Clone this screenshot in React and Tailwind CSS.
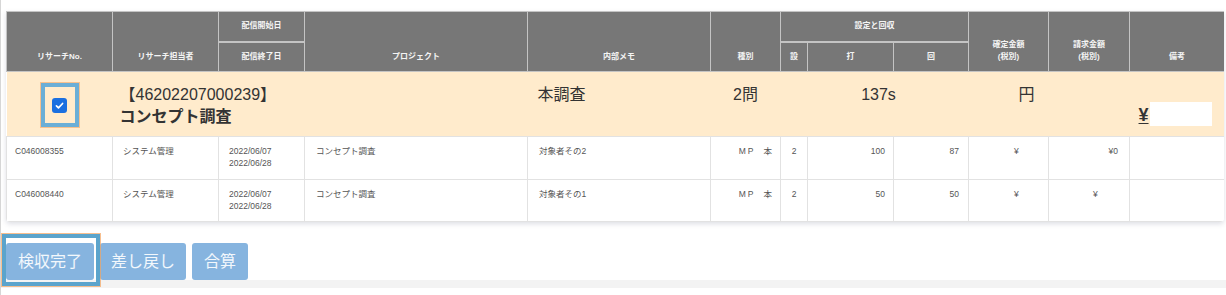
import React from "react";

const th =
  "bg-[#777777] text-[#f4f4f4] font-bold text-[8px] leading-[12px] border border-[#c4c4c4] text-center";
const td =
  "align-top pt-[9px] text-[8.5px] leading-[11.5px] text-[#555] border border-[#e2e2e2] bg-white";

const rows = [
  { no: "C046008355", memo: "対象者その2", set: "2", da: "100", kai: "87", seikyu: "¥0", right: true },
  { no: "C046008440", memo: "対象者その1", set: "2", da: "50", kai: "50", seikyu: "¥", right: false },
];

function CheckMark() {
  return (
    <svg viewBox="0 0 16 16" className="w-[11px] h-[11px]">
      <path d="M3.5 8.5l3 3 6-6.5" fill="none" stroke="white" strokeWidth="2.4" strokeLinecap="round" strokeLinejoin="round" />
    </svg>
  );
}

export default function App() {
  return (
    <div className="w-[1226px] h-[295px] bg-white border-l border-[#d6d6d6] font-['Liberation_Sans','Noto_Sans_CJK_JP',sans-serif] overflow-hidden">
      <div className="pt-[11px] pl-[5px]">
        <div className="w-[1218px] rounded-b-[4px] overflow-hidden shadow-[0_2px_5px_rgba(70,80,110,0.18)]">
          <table className="w-[1218px] table-fixed border-collapse">
            <colgroup>
              <col className="w-[106px]" />
              <col className="w-[106px]" />
              <col className="w-[86px]" />
              <col className="w-[223px]" />
              <col className="w-[183px]" />
              <col className="w-[70px]" />
              <col className="w-[27px]" />
              <col className="w-[86px]" />
              <col className="w-[75px]" />
              <col className="w-[80px]" />
              <col className="w-[81px]" />
              <col className="w-[95px]" />
            </colgroup>
            <thead>
              <tr className="h-[30px]">
                <th rowSpan={2} className={`${th} align-bottom pb-[8px]`}>リサーチNo.</th>
                <th rowSpan={2} className={`${th} align-bottom pb-[8px]`}>リサーチ担当者</th>
                <th className={`${th} align-middle border-b-2`}>配信開始日</th>
                <th rowSpan={2} className={`${th} align-bottom pb-[8px]`}>プロジェクト</th>
                <th rowSpan={2} className={`${th} align-bottom pb-[8px]`}>内部メモ</th>
                <th rowSpan={2} className={`${th} align-bottom pb-[8px]`}>種別</th>
                <th colSpan={3} className={`${th} align-middle border-b-2`}>設定と回収</th>
                <th rowSpan={2} className={`${th} align-bottom pb-[8px]`}>
                  確定金額
                  <br />
                  (税別)
                </th>
                <th rowSpan={2} className={`${th} align-bottom pb-[8px]`}>
                  請求金額
                  <br />
                  (税別)
                </th>
                <th rowSpan={2} className={`${th} align-bottom pb-[8px]`}>備考</th>
              </tr>
              <tr className="h-[30px]">
                <th className={`${th} align-middle`}>配信終了日</th>
                <th className={`${th} align-middle`}>設</th>
                <th className={`${th} align-middle`}>打</th>
                <th className={`${th} align-middle`}>回</th>
              </tr>
            </thead>
            <tbody>
              <tr className="h-[65px] bg-[#ffebcc] text-[#333]">
                <td className="align-middle">
                  <div className="mx-auto mt-[2px] w-[38px] h-[44px] border-4 border-[#6aaed6] outline outline-1 outline-[#f4a460]/60 flex items-center justify-center">
                    <span className="w-[15px] h-[15px] rounded-[3px] bg-[#1a6fe0] flex items-center justify-center">
                      <CheckMark />
                    </span>
                  </div>
                </td>
                <td colSpan={3} className="align-top pt-[12px] pl-[7px] text-[16px] leading-[22px]">
                  <div>【46202207000239】</div>
                  <div className="font-bold">コンセプト調査</div>
                </td>
                <td className="align-top pt-[12px] pl-[10px] text-[16px] leading-[22px]">本調査</td>
                <td className="align-top pt-[12px] text-center text-[16px] leading-[22px]">2問</td>
                <td colSpan={3} className="align-top pt-[12px] pl-[8px] text-center text-[16px] leading-[22px]">137s</td>
                <td className="align-top pt-[12px] pr-[14px] text-right text-[16px] leading-[22px]">円</td>
                <td></td>
                <td className="align-bottom pb-[10px] pl-[9px]">
                  <div className="flex items-end">
                    <span className="font-bold text-[18px] leading-[22px] underline underline-offset-2">¥</span>
                    <span className="ml-[1px] w-[62px] h-[24px] bg-white"></span>
                  </div>
                </td>
              </tr>
              {rows.map((r, i) => (
                <tr key={r.no} className={i === 0 ? "h-[43px]" : "h-[42px]"}>
                  <td className={`${td} pl-[8px]`}>{r.no}</td>
                  <td className={`${td} pl-[10px]`}>システム管理</td>
                  <td className={`${td} pl-[10px]`}>
                    2022/06/07
                    <br />
                    2022/06/28
                  </td>
                  <td className={`${td} pl-[11px]`}>コンセプト調査</td>
                  <td className={`${td} pl-[11px]`}>{r.memo}</td>
                  <td className={`${td} pr-[8px] text-right`}>
                    <span className="tracking-[2px]">MP</span>
                    <span className="ml-[8px]">本</span>
                  </td>
                  <td className={`${td} text-center`}>{r.set}</td>
                  <td className={`${td} pr-[8px] text-right`}>{r.da}</td>
                  <td className={`${td} pr-[9px] text-right`}>{r.kai}</td>
                  <td className={`${td} pl-[45px]`}>¥</td>
                  <td className={`${td} ${r.right ? "pr-[11px] text-right" : "pl-[44px]"}`}>{r.seikyu}</td>
                  <td className={td}></td>
                </tr>
              ))}
            </tbody>
          </table>
        </div>
      </div>
      <div className="mt-[21px] pl-[5px] flex gap-[6px]">
        <div className="relative">
          <button className="h-[37px] px-[12px] rounded-[3px] bg-[#86b4df] text-white/90 text-[16px]">検収完了</button>
          <span className="absolute -top-[9px] -left-[4px] w-[98px] h-[52px] border-4 border-[#5ba4cc] outline outline-1 outline-[#f4a460]/70 pointer-events-none"></span>
        </div>
        <button className="h-[37px] px-[11px] rounded-[3px] bg-[#86b4df] text-white/90 text-[16px]">差し戻し</button>
        <button className="h-[37px] px-[12px] rounded-[3px] bg-[#86b4df] text-white/90 text-[16px]">合算</button>
      </div>
      <div className="h-[8px] bg-[#f3f3f3]"></div>
    </div>
  );
}
